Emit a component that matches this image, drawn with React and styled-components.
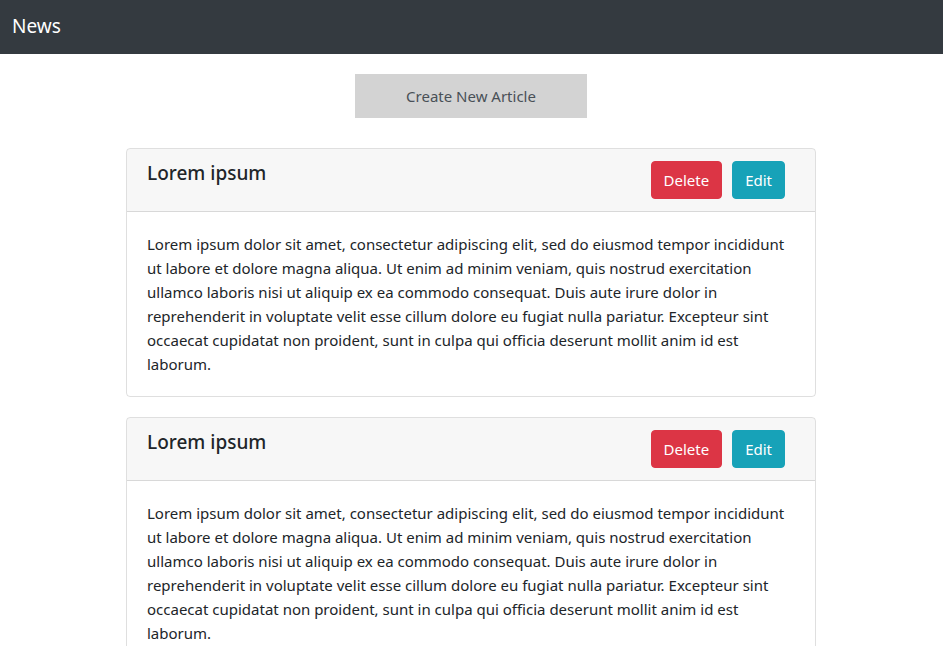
import React from 'react';
import styled, { createGlobalStyle } from 'styled-components';

const GlobalStyle = createGlobalStyle`
  body {
    margin: 0;
    font-family: "Noto Sans", "Open Sans", sans-serif;
    font-size: 15px;
    line-height: 24px;
    color: #212529;
    background: #fff;
  }
`;

const TopBar = styled.nav`
  height: 54px;
  background-color: #343a40;
  display: flex;
  align-items: center;
  padding: 0 12px;
`;

const Brand = styled.span`
  color: #fff;
  font-size: 19px;
  line-height: 1;
  padding-bottom: 2px;
`;

const Main = styled.main`
  display: flex;
  flex-direction: column;
  align-items: center;
  padding: 20px 1px 0 0;
`;

const CreateButton = styled.button`
  width: 232px;
  height: 44px;
  border: none;
  background: #d3d3d3;
  color: #495057;
  font-family: inherit;
  font-size: 15px;
  margin-bottom: 30px;
  cursor: pointer;
`;

const Card = styled.article`
  width: 690px;
  box-sizing: border-box;
  border: 1px solid rgba(0, 0, 0, 0.125);
  border-radius: 4px;
  margin-bottom: 20px;
  overflow: hidden;
`;

const CardHeader = styled.header`
  display: flex;
  justify-content: space-between;
  align-items: flex-start;
  padding: 12px 30px 12px 20px;
  background: rgba(0, 0, 0, 0.03);
  border-bottom: 1px solid rgba(0, 0, 0, 0.125);
`;

const Title = styled.h5`
  margin: 0;
  font-size: 19px;
  font-weight: 500;
  line-height: 24px;
`;

const Actions = styled.div`
  display: flex;
  gap: 10px;
`;

const ActionButton = styled.button`
  height: 38px;
  padding: 0 12px;
  border: 1px solid ${(p) => p.$color};
  border-radius: 4px;
  background: ${(p) => p.$color};
  color: #fff;
  font-family: inherit;
  font-size: 15px;
  line-height: 24px;
  cursor: pointer;
`;

const CardBody = styled.div`
  padding: 20px;
`;

const BodyText = styled.p`
  margin: 0;
`;

const lorem =
  'Lorem ipsum dolor sit amet, consectetur adipiscing elit, sed do eiusmod tempor incididunt ut labore et dolore magna aliqua. Ut enim ad minim veniam, quis nostrud exercitation ullamco laboris nisi ut aliquip ex ea commodo consequat. Duis aute irure dolor in reprehenderit in voluptate velit esse cillum dolore eu fugiat nulla pariatur. Excepteur sint occaecat cupidatat non proident, sunt in culpa qui officia deserunt mollit anim id est laborum.';

const articles = [
  { id: 1, title: 'Lorem ipsum', body: lorem },
  { id: 2, title: 'Lorem ipsum', body: lorem },
];

export default function App() {
  return (
    <>
      <GlobalStyle />
      <TopBar>
        <Brand>News</Brand>
      </TopBar>
      <Main>
        <CreateButton>Create New Article</CreateButton>
        {articles.map((a) => (
          <Card key={a.id}>
            <CardHeader>
              <Title>{a.title}</Title>
              <Actions>
                <ActionButton $color="#dc3545">Delete</ActionButton>
                <ActionButton $color="#17a2b8">Edit</ActionButton>
              </Actions>
            </CardHeader>
            <CardBody>
              <BodyText>{a.body}</BodyText>
            </CardBody>
          </Card>
        ))}
      </Main>
    </>
  );
}
